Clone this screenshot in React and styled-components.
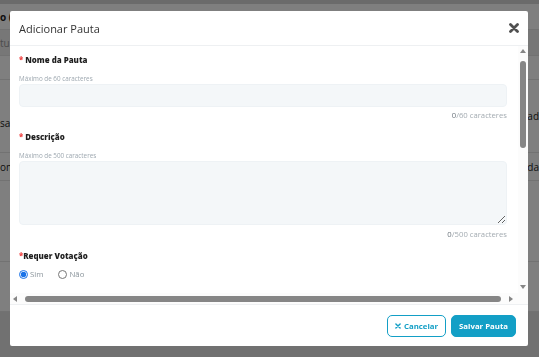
import styled, { createGlobalStyle } from "styled-components";

const GlobalStyle = createGlobalStyle`
  html, body {
    margin: 0;
    padding: 0;
    font-family: "Open Sans", "Liberation Sans", sans-serif;
    background: #ffffff;
  }
  * {
    box-sizing: border-box;
  }
`;

/* page behind the modal, dimmed by the overlay */
const Page = styled.div`
  width: 539px;
  height: 357px;
  overflow: hidden;
  display: flex;
  flex-direction: column;
  background: #fff;
  border-top: 4px solid #d6d6d6;
`;

const PageRow = styled.div`
  height: ${(p) => p.$h}px;
  flex-shrink: 0;
  display: flex;
  align-items: center;
  justify-content: space-between;
  font-size: 10px;
  font-weight: ${(p) => (p.$bold ? 700 : 400)};
  color: ${(p) => p.$color || "#222"};
  background: ${(p) => p.$bg || "#fff"};
  border-bottom: 1px solid #e4e4e4;
  white-space: nowrap;
`;

const PageFoot = styled.div`
  flex: 1;
  background: #e2e2e2;
`;

const Overlay = styled.div`
  position: fixed;
  inset: 0;
  background: rgba(0, 0, 0, 0.5);
  display: flex;
  align-items: center;
  justify-content: center;
`;

const Modal = styled.div`
  width: 518px;
  height: 335px;
  margin-left: -1px;
  background: #fff;
  border-radius: 2px;
  display: flex;
  flex-direction: column;
  overflow: hidden;
`;

const Header = styled.div`
  height: 35px;
  flex-shrink: 0;
  display: flex;
  align-items: center;
  justify-content: space-between;
  padding: 0 9px 0 9px;
  border-bottom: 1px solid #eef0f2;
`;

const Title = styled.h2`
  margin: 0;
  font-size: 11px;
  font-weight: 400;
  color: #333;
`;

const Close = styled.button`
  border: none;
  background: none;
  padding: 0;
  width: 11px;
  height: 11px;
  display: flex;
  align-items: center;
  justify-content: center;
  cursor: pointer;
`;

/* body with its classic scrollbars */
const ScrollArea = styled.div`
  flex: 1;
  min-height: 0;
  display: grid;
  grid-template-columns: 1fr 10px;
  grid-template-rows: 1fr 11px;
`;

const Viewport = styled.div`
  overflow: hidden;
  min-height: 0;
`;

const VBar = styled.div`
  display: flex;
  flex-direction: column;
  align-items: center;
  gap: 8px;
  padding: 3px 0 4px;
  background: #fcfcfc;
`;

const HBar = styled.div`
  display: flex;
  align-items: center;
  gap: 8px;
  padding: 1px 5px 0 3px;
  background: #fcfcfc;
`;

const Track = styled.div`
  flex: 1;
  display: flex;
  flex-direction: ${(p) => (p.$vertical ? "column" : "row")};
  align-items: center;
`;

const Thumb = styled.div`
  background: #868686;
  border-radius: 3px;
  width: ${(p) => (p.$vertical ? "6px" : "100%")};
  height: ${(p) => (p.$vertical ? `${p.$size}px` : "6px")};
`;

const Arrow = styled.span`
  width: 0;
  height: 0;
  flex-shrink: 0;
  border-style: solid;
  border-color: transparent;
  ${(p) =>
    p.$dir === "up"
      ? "border-width: 0 3.5px 4px; border-bottom-color: #868686;"
      : p.$dir === "down"
      ? "border-width: 4px 3.5px 0; border-top-color: #868686;"
      : p.$dir === "left"
      ? "border-width: 3.5px 4px 3.5px 0; border-right-color: #868686;"
      : "border-width: 3.5px 0 3.5px 4px; border-left-color: #868686;"}
`;

const Corner = styled.div`
  background: #fcfcfc;
`;

const Content = styled.div`
  padding: 8px 11px 20px 9px;
  display: flex;
  flex-direction: column;
`;

const Field = styled.div`
  display: flex;
  flex-direction: column;
  margin-bottom: ${(p) => p.$mb ?? 14}px;
`;

const Label = styled.label`
  font-size: 7.9px;
  font-weight: 800;
  color: #1f1f1f;
  line-height: 12px;
  margin-bottom: 8px;
`;

const Req = styled.span`
  color: #f04a4a;
  margin-right: ${(p) => (p.$tight ? 0 : 2)}px;
`;

const Hint = styled.div`
  font-size: 6.3px;
  color: #9ea8b0;
  line-height: 9px;
  margin-bottom: 1px;
`;

const Input = styled.input`
  height: 23px;
  border: 1px solid #eef2f5;
  border-radius: 4px;
  background: #f4f7f9;
  outline: none;
  padding: 0 8px;
  font-size: 9px;
  font-family: inherit;
`;

const TextArea = styled.textarea`
  height: 64px;
  border: 1px solid #eef2f5;
  border-radius: 4px;
  background: #f4f7f9;
  outline: none;
  padding: 6px 8px;
  font-size: 9px;
  font-family: inherit;
  resize: vertical;
`;

const Counter = styled.div`
  text-align: right;
  font-size: 7.7px;
  color: #a3abb1;
  line-height: 11px;
  margin-top: ${(p) => p.$mt ?? 4}px;
  b {
    font-weight: 400;
    color: #6c757d;
  }
`;

const RadioRow = styled.div`
  display: flex;
  align-items: center;
  gap: 15px;
  margin-top: -1px;
`;

const RadioLabel = styled.label`
  display: flex;
  align-items: center;
  gap: 2px;
  font-size: 7.8px;
  line-height: 10px;
  color: #8a949b;
  input {
    margin: 0;
    width: 9px;
    height: 9px;
    accent-color: #1a73e8;
  }
`;

const Footer = styled.div`
  height: 42px;
  flex-shrink: 0;
  display: flex;
  align-items: center;
  justify-content: flex-end;
  gap: 5px;
  padding: 0 12px 0 0;
  border-top: 1px solid #eef0f2;
`;

const Button = styled.button`
  height: 22px;
  padding: 0 7px;
  border-radius: 5px;
  border: 1px solid #139fc6;
  background: ${(p) => (p.$outline ? "#fff" : "#139fc6")};
  color: ${(p) => (p.$outline ? "#139fc6" : "#fff")};
  font-family: inherit;
  font-size: 7.8px;
  font-weight: 700;
  display: flex;
  align-items: center;
  gap: 3px;
  cursor: pointer;
`;

const XIcon = ({ size, color, stroke }) => (
  <svg width={size} height={size} viewBox="0 0 10 10">
    <path
      d="M1.5 1.5 L8.5 8.5 M8.5 1.5 L1.5 8.5"
      stroke={color}
      strokeWidth={stroke}
      strokeLinecap="round"
    />
  </svg>
);

export default function App() {
  return (
    <>
      <GlobalStyle />
      <Page>
        <PageRow $h={26} $bold>
          <span>o (</span>
        </PageRow>
        <PageRow $h={26} $bg="#eeeeee" $color="#999">
          <span>tu</span>
        </PageRow>
        <PageRow $h={24} />
        <PageRow $h={73}>
          <span style={{ marginTop: 14 }}>sa .</span>
          <span>iad</span>
        </PageRow>
        <PageRow $h={28}>
          <span>om</span>
          <span>da</span>
        </PageRow>
        <PageRow $h={81} />
        <PageRow $h={50} />
        <PageFoot />
      </Page>
      <Overlay>
        <Modal>
          <Header>
            <Title>Adicionar Pauta</Title>
            <Close aria-label="Fechar">
              <XIcon size={10} color="#505050" stroke={2.8} />
            </Close>
          </Header>
          <ScrollArea>
            <Viewport>
              <Content>
                <Field $mb={10}>
                  <Label>
                    <Req>*</Req>Nome da Pauta
                  </Label>
                  <Hint>Máximo de 60 caracteres</Hint>
                  <Input />
                  <Counter $mt={3}>
                    <b>0</b>/60 caracteres
                  </Counter>
                </Field>
                <Field $mb={10}>
                  <Label>
                    <Req>*</Req>Descrição
                  </Label>
                  <Hint>Máximo de 500 caracteres</Hint>
                  <TextArea />
                  <Counter>
                    <b>0</b>/500 caracteres
                  </Counter>
                </Field>
                <Field>
                  <Label>
                    <Req $tight>*</Req>Requer Votação
                  </Label>
                  <RadioRow>
                    <RadioLabel>
                      <input type="radio" name="votacao" defaultChecked /> Sim
                    </RadioLabel>
                    <RadioLabel>
                      <input type="radio" name="votacao" /> Não
                    </RadioLabel>
                  </RadioRow>
                </Field>
              </Content>
            </Viewport>
            <VBar>
              <Arrow $dir="up" />
              <Track $vertical>
                <Thumb $vertical $size={87} />
              </Track>
              <Arrow $dir="down" />
            </VBar>
            <HBar>
              <Arrow $dir="left" />
              <Track>
                <Thumb />
              </Track>
              <Arrow $dir="right" />
            </HBar>
            <Corner />
          </ScrollArea>
          <Footer>
            <Button $outline>
              <XIcon size={6} color="#139fc6" stroke={2.4} />
              Cancelar
            </Button>
            <Button>Salvar Pauta</Button>
          </Footer>
        </Modal>
      </Overlay>
    </>
  );
}
